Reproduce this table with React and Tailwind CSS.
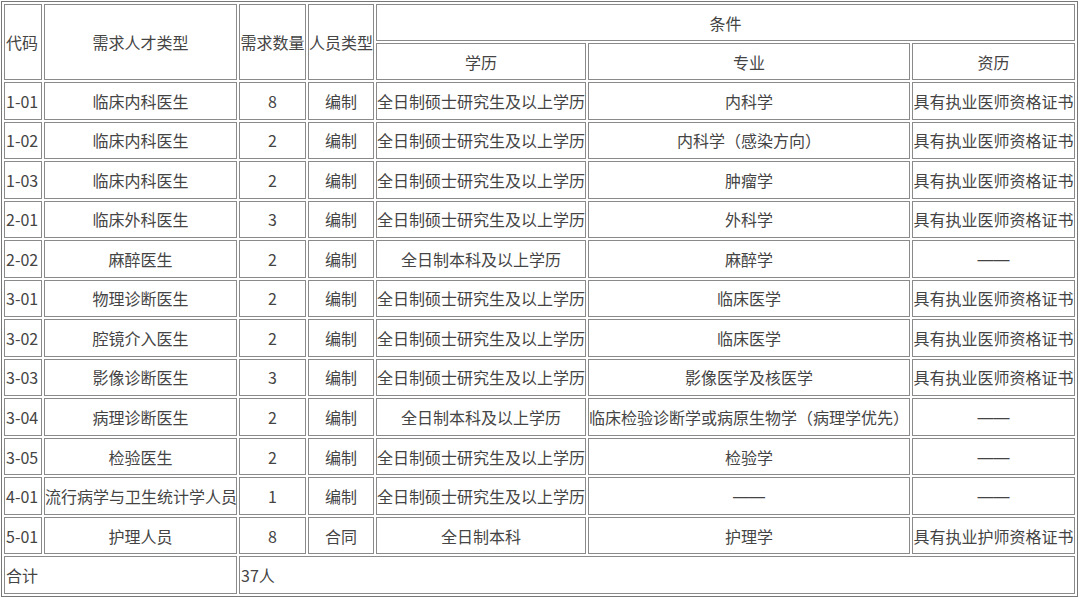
const rows = [
  ['1-01', '临床内科医生', '8', '编制', '全日制硕士研究生及以上学历', '内科学', '具有执业医师资格证书'],
  ['1-02', '临床内科医生', '2', '编制', '全日制硕士研究生及以上学历', '内科学（感染方向）', '具有执业医师资格证书'],
  ['1-03', '临床内科医生', '2', '编制', '全日制硕士研究生及以上学历', '肿瘤学', '具有执业医师资格证书'],
  ['2-01', '临床外科医生', '3', '编制', '全日制硕士研究生及以上学历', '外科学', '具有执业医师资格证书'],
  ['2-02', '麻醉医生', '2', '编制', '全日制本科及以上学历', '麻醉学', '——'],
  ['3-01', '物理诊断医生', '2', '编制', '全日制硕士研究生及以上学历', '临床医学', '具有执业医师资格证书'],
  ['3-02', '腔镜介入医生', '2', '编制', '全日制硕士研究生及以上学历', '临床医学', '具有执业医师资格证书'],
  ['3-03', '影像诊断医生', '3', '编制', '全日制硕士研究生及以上学历', '影像医学及核医学', '具有执业医师资格证书'],
  ['3-04', '病理诊断医生', '2', '编制', '全日制本科及以上学历', '临床检验诊断学或病原生物学（病理学优先）', '——'],
  ['3-05', '检验医生', '2', '编制', '全日制硕士研究生及以上学历', '检验学', '——'],
  ['4-01', '流行病学与卫生统计学人员', '1', '编制', '全日制硕士研究生及以上学历', '——', '——'],
  ['5-01', '护理人员', '8', '合同', '全日制本科', '护理学', '具有执业护师资格证书'],
];

const cell = 'border border-[#8a8a8a] p-0 align-middle whitespace-nowrap overflow-hidden';

// the dash cells use a 1em wide dash, as in the source
const Value = ({ v }) =>
  v === '——' ? <span className="font-['Liberation_Sans',sans-serif]">{v}</span> : v;

export default function App() {
  return (
    <div className="w-[1080px] h-[597px] bg-white pl-px pt-px font-['Noto_Sans_CJK_SC',sans-serif] text-[16px] leading-[20px] text-[#444]">
      <table className="table-fixed w-[1077px] h-[596px] border-separate border-spacing-[2px] border border-[#777]">
        <colgroup>
          <col className="w-[38px]" />
          <col className="w-[193px]" />
          <col className="w-[67px]" />
          <col className="w-[66px]" />
          <col className="w-[210px]" />
          <col className="w-[322px]" />
          <col className="w-[163px]" />
        </colgroup>
        <thead>
          <tr className="h-[37px]">
            <th rowSpan={2} className={`${cell} font-normal text-left pl-px`}>代码</th>
            <th rowSpan={2} className={`${cell} font-normal text-center`}>需求人才类型</th>
            <th rowSpan={2} className={`${cell} font-normal text-center`}>需求数量</th>
            <th rowSpan={2} className={`${cell} font-normal text-center`}>人员类型</th>
            <th colSpan={3} className={`${cell} font-normal text-center`}>条件</th>
          </tr>
          <tr className="h-[37px]">
            <th className={`${cell} font-normal text-center`}>学历</th>
            <th className={`${cell} font-normal text-center`}>专业</th>
            <th className={`${cell} font-normal text-center`}>资历</th>
          </tr>
        </thead>
        <tbody>
          {rows.map((r) => (
            <tr key={r[0]} className="h-[37px]">
              <td className={`${cell} text-left pl-px`}>{r[0]}</td>
              {r.slice(1).map((v, i) => (
                <td key={i} className={`${cell} text-center`}>
                  <Value v={v} />
                </td>
              ))}
            </tr>
          ))}
          <tr className="h-[37px]">
            <td colSpan={2} className={`${cell} text-left pl-px`}>合计</td>
            <td colSpan={5} className={`${cell} text-left pl-px`}>37人</td>
          </tr>
        </tbody>
      </table>
    </div>
  );
}
